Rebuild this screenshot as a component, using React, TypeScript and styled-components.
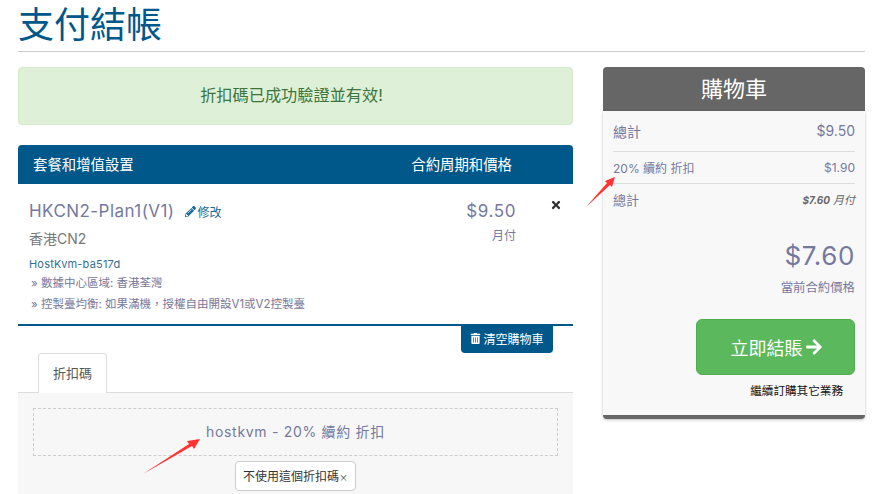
import React from "react";
import styled, { createGlobalStyle } from "styled-components";
import { FaPencilAlt, FaTrashAlt, FaArrowRight, FaTimes } from "react-icons/fa";

const Global = createGlobalStyle`
  html, body { margin: 0; padding: 0; background: #fff; overflow: hidden; }
  body { font-family: "Inter", "Noto Sans CJK TC", sans-serif; font-size: 14px; color: #75799f; }
  * { box-sizing: border-box; }
`;

const Page = styled.div`
  position: relative;
  width: 878px;
  height: 494px;
  padding: 0 13px 0 18px;
  overflow: hidden;
`;
const Title = styled.h1`
  margin: 0;
  height: 52px;
  border-bottom: 1px solid #ccc;
  font-size: 36px;
  line-height: 51px;
  font-weight: 400;
  color: #00578a;
  font-family: "Inter", "Noto Sans CJK TC", sans-serif;
`;
const Columns = styled.div`
  display: flex;
  gap: 30px;
  margin-top: 15px;
`;
const Left = styled.div`
  width: 555px;
  flex: none;
`;
const Right = styled.aside`
  width: 262px;
  flex: none;
`;
const Alert = styled.div`
  height: 58px;
  background: #dff0d8;
  border: 1px solid #d6e9c6;
  border-radius: 4px;
  color: #3c763d;
  font-size: 16.2px;
  padding: 0 8px 4px 0;
  display: flex;
  align-items: center;
  justify-content: center;
`;
const TableHead = styled.div`
  margin-top: 20px;
  height: 39px;
  background: #00578a;
  border-radius: 4px 4px 0 0;
  color: #fff;
  font-size: 14.4px;
  padding: 0 61px 3px 15px;
  display: flex;
  align-items: center;
  justify-content: space-between;
`;
const Item = styled.div`
  position: relative;
  height: 142px;
  border-bottom: 2px solid #00578a;
  padding: 14px 11px 0;
  display: flex;
  justify-content: space-between;
`;
const ItemInfo = styled.div`
  display: flex;
  flex-direction: column;
`;
const PlanLine = styled.div`
  display: flex;
  align-items: center;
  height: 26px;
  gap: 10px;
`;
const PlanName = styled.span`
  font-size: 17px;
  letter-spacing: 0.45px;
`;
const EditLink = styled.span`
  color: #1d6a96;
  font-size: 12px;
  display: inline-flex;
  align-items: center;
  gap: 2px;
`;
const Group = styled.div`
  font-size: 14px;
  margin-top: 5px;
  line-height: 20px;
  color: #777;
`;
const Domain = styled.div`
  font-size: 11px;
  color: #336f8f;
  margin-top: 6px;
  line-height: 18px;
  letter-spacing: 0.2px;
`;
const Option = styled.div`
  font-size: 11.5px;
  line-height: 20.5px;
  margin-left: 2px;
  color: #777799;
`;
const PriceCol = styled.div`
  margin-right: 46px;
  text-align: right;
`;
const Price = styled.div`
  font-size: 17px;
  line-height: 26px;
  letter-spacing: 0.6px;
`;
const Cycle = styled.div`
  font-size: 12px;
  line-height: 24px;
`;
const Remove = styled.span`
  position: absolute;
  right: 11px;
  top: 15px;
  color: #333;
  display: flex;
`;
const EmptyRow = styled.div`
  display: flex;
  justify-content: flex-end;
  padding-right: 20px;
`;
const EmptyBtn = styled.button`
  width: 92px;
  height: 27px;
  padding: 0 0 2px;
  border: 0;
  border-radius: 0 0 4px 4px;
  background: #00578a;
  color: #fff;
  font: 12px "Noto Sans CJK TC", sans-serif;
  display: flex;
  align-items: center;
  justify-content: center;
  gap: 2px;
`;
const Tabs = styled.div`
  height: 40px;
  padding-left: 20px;
  border-bottom: 1px solid #ddd;
  display: flex;
`;
const Tab = styled.div`
  width: 69px;
  height: 40px;
  background: #fff;
  border: 1px solid #ddd;
  border-bottom: 0;
  border-radius: 4px 4px 0 0;
  color: #555;
  font-size: 13px;
  padding-bottom: 3px;
  display: flex;
  align-items: center;
  justify-content: center;
`;
const TabPanel = styled.div`
  height: 101px;
  background: #f7f7f7;
  padding: 15px 15px 0;
  display: flex;
  flex-direction: column;
  align-items: center;
`;
const Applied = styled.div`
  width: 100%;
  height: 48px;
  border: 1px dashed #ccc;
  padding-bottom: 3px;
  display: flex;
  align-items: center;
  justify-content: center;
  font-size: 14px;
  letter-spacing: 0.7px;
`;
const RemoveCode = styled.button`
  margin-top: 5px;
  width: 121px;
  height: 30px;
  padding: 0 0 2px;
  background: #fff;
  border: 1px solid #ccc;
  border-radius: 4px;
  color: #333;
  font: 12px "Noto Sans CJK TC", sans-serif;
  small { font-size: 9px; }
`;
const CartHead = styled.div`
  height: 44px;
  background: #666;
  border-radius: 4px 4px 0 0;
  color: #fff;
  font-size: 22px;
  padding-bottom: 5px;
  display: flex;
  align-items: center;
  justify-content: center;
`;
const CartBody = styled.div`
  height: 308px;
  background: #f8f8f8;
  border-bottom: 4px solid #666;
  border-radius: 0 0 4px 4px;
  box-shadow: 0 1px 3px rgba(0, 0, 0, 0.25);
  padding: 0 10px;
  display: flex;
  flex-direction: column;
`;
const SumRow = styled.div<{ $h: number; $line?: boolean; $size: number; $pad?: number }>`
  height: ${(p) => p.$h}px;
  border-bottom: ${(p) => (p.$line ? "1px solid #ddd" : "0")};
  font-size: ${(p) => p.$size}px;
  padding-bottom: ${(p) => p.$pad ?? 0}px;
  display: flex;
  align-items: center;
  justify-content: space-between;
`;
const Recurring = styled.em`
  font-size: 11px;
  color: #666;
  b { font-size: 10px; }
`;
const Total = styled.div`
  margin-top: 22px;
  text-align: right;
  font-size: 26px;
  line-height: 36px;
  letter-spacing: 0.6px;
`;
const TotalNote = styled.div`
  margin-top: 4px;
  text-align: right;
  font-size: 12.4px;
  line-height: 20px;
`;
const Checkout = styled.button`
  margin: 21px 0 0 83px;
  width: 159px;
  height: 56px;
  flex: none;
  background: #5cb85c;
  border: 1px solid #4cae4c;
  border-radius: 6px;
  color: #fff;
  font: 18px "Noto Sans CJK TC", sans-serif;
  display: flex;
  align-items: center;
  justify-content: center;
  gap: 2px;
  padding: 0 0 0 2px;
`;
const Continue = styled.div`
  margin-top: 8px;
  padding-right: 12px;
  text-align: right;
  font-size: 11.6px;
  line-height: 16px;
  color: #111;
`;
const Arrow = styled.svg`
  position: absolute;
  left: 0;
  top: 0;
  pointer-events: none;
`;

export default function App() {
  return (
    <Page>
      <Global />
      <Title>支付結帳</Title>
      <Columns>
        <Left>
          <Alert>折扣碼已成功驗證並有效!</Alert>
          <TableHead>
            <span>套餐和增值設置</span>
            <span>合約周期和價格</span>
          </TableHead>
          <Item>
            <ItemInfo>
              <PlanLine>
                <PlanName>HKCN2-Plan1(V1)</PlanName>
                <EditLink>
                  <FaPencilAlt size={11} />
                  修改
                </EditLink>
              </PlanLine>
              <Group>香港CN2</Group>
              <Domain>HostKvm-ba517d</Domain>
              <Option>» 數據中心區域: 香港荃灣</Option>
              <Option>» 控製臺均衡: 如果滿機&#xFF0C;授權自由開設V1或V2控製臺</Option>
            </ItemInfo>
            <PriceCol>
              <Price>$9.50</Price>
              <Cycle>月付</Cycle>
            </PriceCol>
            <Remove>
              <FaTimes size={12} />
            </Remove>
          </Item>
          <EmptyRow>
            <EmptyBtn>
              <FaTrashAlt size={11} />
              清空購物車
            </EmptyBtn>
          </EmptyRow>
          <Tabs>
            <Tab>折扣碼</Tab>
          </Tabs>
          <TabPanel>
            <Applied>hostkvm - 20% 續約 折扣</Applied>
            <RemoveCode>
              不使用這個折扣碼<small>×</small>
            </RemoveCode>
          </TabPanel>
        </Left>
        <Right>
          <CartHead>購物車</CartHead>
          <CartBody>
            <SumRow $h={41} $line $size={14} $pad={1}>
              <span>總計</span>
              <span>$9.50</span>
            </SumRow>
            <SumRow $h={32} $line $size={12}>
              <span>20% 續約 折扣</span>
              <span>$1.90</span>
            </SumRow>
            <SumRow $h={32} $size={13} $pad={2}>
              <span>總計</span>
              <Recurring>
                <b>$7.60</b> 月付
              </Recurring>
            </SumRow>
            <Total>$7.60</Total>
            <TotalNote>當前合約價格</TotalNote>
            <Checkout>
              立即結賬
              <FaArrowRight size={18} />
            </Checkout>
            <Continue>繼續訂購其它業務</Continue>
          </CartBody>
        </Right>
      </Columns>
      <Arrow width="878" height="494" viewBox="0 0 878 494">
        <path d="M586 207 L607 183 L605 181 L615 177 L612 187 L610 185 Z" fill="#f33" />
        <path d="M143 474 L189 444 L187 441 L200 439 L194 449 L192 446 Z" fill="#f33" />
      </Arrow>
    </Page>
  );
}
